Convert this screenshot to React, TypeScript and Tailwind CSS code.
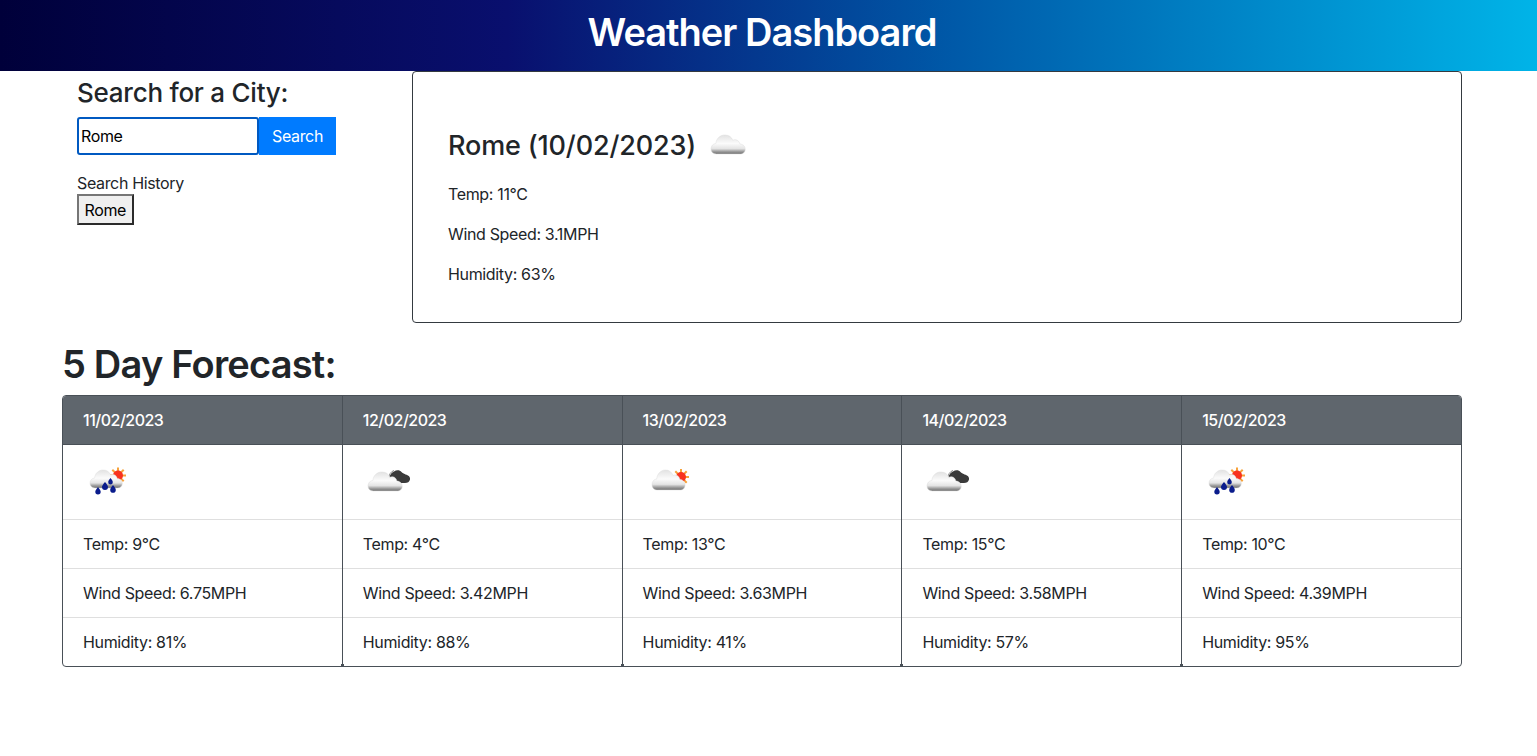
import { useId } from 'react';

type Kind = 'cloud' | 'rain' | 'sun' | 'dark';

const forecast: { date: string; kind: Kind; temp: string; wind: string; humidity: string }[] = [
  { date: '11/02/2023', kind: 'rain', temp: '9', wind: '6.75', humidity: '81' },
  { date: '12/02/2023', kind: 'dark', temp: '4', wind: '3.42', humidity: '88' },
  { date: '13/02/2023', kind: 'sun', temp: '13', wind: '3.63', humidity: '41' },
  { date: '14/02/2023', kind: 'dark', temp: '15', wind: '3.58', humidity: '57' },
  { date: '15/02/2023', kind: 'rain', temp: '10', wind: '4.39', humidity: '95' },
];

const CLOUD = 'M8 34c-4 0-6-2.500-6-5.500 0-3 2.500-5.500 5.500-5.500 .5-5.500 5-9 10-9 4.500 0 7.500 2 9 5.500 1-.5 2.500-.8 3.500-.5 2.500.5 4 2.500 4.500 4.500 3.500 0 6 2.500 6 5.500 0 3-2.500 5-5.500 5z';

function WeatherIcon({ kind }: { kind: Kind }) {
  const id = useId();
  const sunCenter = kind === 'rain' ? 'translate(35 18.500)' : 'translate(38 20)';
  const cloudFit =
    kind === 'rain'
      ? 'translate(7 13) scale(.84 .9) translate(-2 -14)'
      : kind === 'sun'
        ? 'translate(9 13) scale(.86 1) translate(-2 -14)'
        : 'translate(5 15) scale(.89 .95) translate(-2 -14)';
  return (
    <svg width="50" height="50" viewBox="0 0 50 50" className="block">
      <defs>
        <linearGradient id={id} x1="0" y1="0" x2="0" y2="1">
          <stop offset="0" stopColor="#e2e2e2" />
          <stop offset="0.45" stopColor="#fbfbfb" />
          <stop offset="0.72" stopColor="#e4e4e4" />
          <stop offset="0.86" stopColor="#a0a0a0" />
          <stop offset="1" stopColor="#6e6e6e" />
        </linearGradient>
      </defs>
      {(kind === 'rain' || kind === 'sun') && (
        <g transform={sunCenter}>
          <path d="M0-8v16M-8 0h16M-5.700-5.700l11.400 11.400M5.700-5.700l-11.400 11.400" stroke="#f7a23b" strokeWidth="2" />
          <circle r="5" fill="#f8331f" />
        </g>
      )}
      {kind === 'dark' && (
        <g>
          <path
            d="M26 26c-.5-6 1.500-10 5-11.500 2.500-2 6-1.500 7.500.5 1.500 1.500 3 1.500 4 2.500 3 .5 5 2.500 4.500 5-.5 2.500-2.500 3.500-5 3.500H31z"
            fill="#3a3a3a"
          />
          <path d="M25.500 22c.2-4 2.200-7.500 5.500-8.500" fill="none" stroke="#8a8a8a" strokeWidth="1" />
        </g>
      )}
      <path d={CLOUD} fill={`url(#${id})`} stroke="#dcdcdc" strokeWidth=".5" transform={cloudFit} />
      {kind === 'rain' && (
        <g fill="#0a1c8c">
          <path d="M27.500 21c1.400 1.900 2.300 3 2.300 4.200a2.300 2.300 0 0 1-4.600 0c0-1.200.9-2.300 2.300-4.200z" />
          <path d="M15 30c1.600 2.100 2.700 3.400 2.700 4.800a2.700 2.700 0 0 1-5.400 0c0-1.400 1.100-2.700 2.700-4.800z" />
          <path d="M22 25c1.900 2.300 3 3.700 3 5.100a3 3 0 0 1-6 0c0-1.400 1.100-2.800 3-5.100z" />
          <path d="M30 28c1.700 2.200 2.800 3.500 2.800 4.900a2.800 2.800 0 0 1-5.600 0c0-1.400 1.100-2.700 2.800-4.900z" />
        </g>
      )}
    </svg>
  );
}

export default function App() {
  return (
    <div className="min-h-screen bg-white text-[#212529] tracking-[-0.35px] font-['Inter','Liberation_Sans',sans-serif]">
      <header className="h-[71px] flex items-start justify-center pr-[13px] bg-[linear-gradient(90deg,#00003a_0%,#090f6e_33%,#0059a8_62%,#00b4e8_100%)]">
        <h1 className="text-[38px] font-semibold text-white tracking-[-1px] leading-[64px]">Weather Dashboard</h1>
      </header>

      <main className="w-[1400px] ml-[62px]">
        <div className="flex h-[252px]">
          <section className="w-[350px] pl-[15px]">
            <h2 className="text-[26px] font-medium leading-[30px] mt-[7px] tracking-[-0.25px]">Search for a City:</h2>
            <div className="flex mt-[9px] h-[38px]">
              <input
                readOnly
                value="Rome"
                className="w-[182px] h-full border-2 border-[#0059c1] rounded-[3px] px-[2px] text-[16px] text-black bg-white outline-none"
              />
              <button className="w-[77px] h-full bg-[#007bff] text-white text-[16px]">Search</button>
            </div>
            <p className="text-[16px] leading-[24px] mt-[16px]">Search History</p>
            <button className="block -mt-px h-[31px] px-[5.500px] bg-[#efefef] border-2 border-t-[#767676] border-l-[#767676] border-r-[#2b2b2b] border-b-[#2b2b2b] text-[16px] text-black">
              Rome
            </button>
          </section>

          <section className="w-[1050px] h-[252px] border border-[#343a40] rounded-[4px] pl-[35px] pt-[48px]">
            <div className="flex items-center h-[50px] gap-[10px]">
              <h2 className="text-[27px] font-medium leading-[30px] mt-[2px] tracking-[-0.15px]">Rome (10/02/2023)</h2>
              <WeatherIcon kind="cloud" />
            </div>
            <div className="text-[16px] leading-[24px] mt-[12px] flex flex-col gap-[16px]">
              <p>Temp: 11°C</p>
              <p>Wind Speed: 3.1MPH</p>
              <p>Humidity: 63%</p>
            </div>
          </section>
        </div>

        <h2 className="text-[38px] font-semibold leading-[46px] mt-[18px] tracking-[-0.8px]">5 Day Forecast:</h2>

        <div className="flex mt-[8px] h-[272px] border border-[#495057] rounded-[4px] overflow-hidden">
          {forecast.map((day, i) => (
            <div key={day.date} className={`relative flex-1 flex flex-col ${i > 0 ? 'border-l border-[#495057]' : ''}`}>
              <div className="h-[49px] bg-[#5f666d] border-b border-[#495057] text-white font-medium tracking-[-0.5px] flex items-center pl-[20px] text-[16px]">
                {day.date}
              </div>
              <div className="h-[75px] border-b border-[#dfdfdf] pl-[20px] pt-[12px]">
                <WeatherIcon kind={day.kind} />
              </div>
              <div className="h-[49px] border-b border-[#dfdfdf] flex items-center pl-[20px] text-[16px]">
                Temp: {day.temp}°C
              </div>
              <div className="h-[49px] border-b border-[#dfdfdf] flex items-center pl-[20px] text-[16px]">
                Wind Speed: {day.wind}MPH
              </div>
              <div className="h-[48px] flex items-center pl-[20px] text-[16px]">Humidity: {day.humidity}%</div>
              {i > 0 && <span className="absolute bottom-0 -left-[2px] w-[3px] h-[2px] bg-[#495057]" />}
            </div>
          ))}
        </div>
      </main>
    </div>
  );
}
